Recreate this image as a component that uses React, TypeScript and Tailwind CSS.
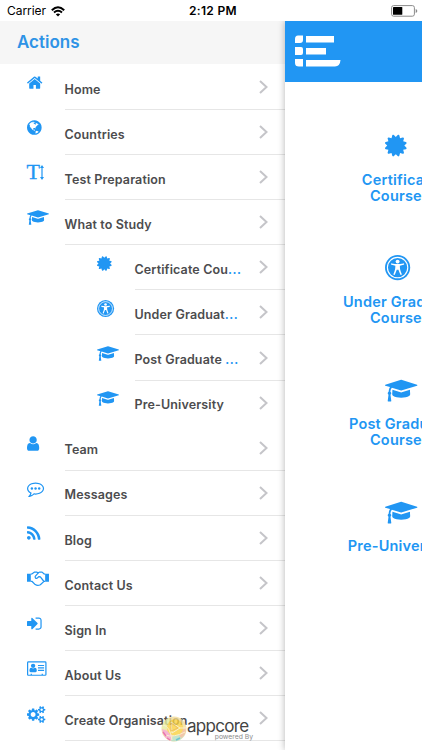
import { ReactNode } from 'react';

type IconName =
  | 'home' | 'globe' | 'textHeight' | 'cap' | 'certificate' | 'access' | 'user'
  | 'comment' | 'rss' | 'handshake' | 'signIn' | 'card' | 'cogs';

type GlyphProps = {
  x?: number;
  w: number;
  className: string;
  children: ReactNode;
};

// All glyphs share a 1792 unit em height
const Glyph = ({ x = 0, w, className, children }: GlyphProps) => (
  <svg viewBox={`${x} 0 ${w} 1792`} className={`block w-auto overflow-visible fill-current ${className}`}>
    {children}
  </svg>
);

const Icon = ({ name, className = 'h-[17.1px]' }: { name: IconName; className?: string }) => {
  switch (name) {
    case 'home':
      return (
        <Glyph x={90} w={1612} className={className}>
          <path d="M1472 992v480q0 26-19 45t-45 19h-384v-384h-256v384h-384q-26 0-45-19t-19-45v-480q0-1 .5-3t.5-3l575-474 575 474q1 2 1 6zm223-69l-62 74q-8 9-21 11h-3q-13 0-21-7l-692-577-692 577q-12 8-24 7-13-2-21-11l-62-74q-8-10-7-23.5t11-21.5l719-599q32-26 76-26t76 26l244 204v-195q0-14 9-23t23-9h192q14 0 23 9t9 23v408l219 182q10 8 11 21.5t-7 23.5z" />
        </Glyph>
      );
    case 'globe':
      return (
        <Glyph x={128} w={1536} className={className}>
          <path d="M896 128q209 0 385.5 103t279.5 279.5 103 385.5-103 385.5-279.5 279.5-385.5 103-385.5-103-279.5-279.5-103-385.5 103-385.5 279.5-279.5 385.5-103zm274 521q-2 1-9.5 9.5t-13.5 9.5q2 0 4.5-5t5-11 3.5-7q6-7 22-15 14-6 52-12 34-8 51 11-2-2 9.5-13t14.5-12q3-2 15-4.5t15-7.5l2-22q-12 1-17.5-7t-6.5-21q0 2-6 8 0-7-4.5-8t-11.5 1-9 1q-10-3-15-7.5t-8-16.5-4-15q-2-5-9.5-11t-9.5-10q-1-2-2.5-5.5t-3-6.5-4-5.5-5.5-2.5-7 5-7.5 10-4.5 5q-3-2-6-1.5t-4.5 1-4.5 3-5 3.5q-3 2-8.5 3t-8.5 2q15-5-1-11-10-4-16-3 9-4 7.5-12t-8.5-14h5q-1-4-8.5-8.5t-17.5-8.5-13-6q-8-5-34-9.5t-33-.5q-5 6-4.5 10.5t4 14 3.5 12.5q1 6-5.5 13t-6.5 12q0 7 14 15.5t10 21.5q-3 8-16 16t-16 12q-5 8-1.5 18.5t10.5 16.5q2 2 1.5 4t-3.5 4.5-5.5 4-6.5 3.5l-3 2q-11 5-20.5-6t-13.5-26q-7-25-16-30-23-8-29 1-5-13-41-26-25-9-58-4 6-1 0-15-7-15-19-12 3-6 4-17.5t1-13.5q3-13 12-23 1-1 7-8.5t9.5-13.5.5-6q35 4 50-11 5-5 11.5-17t10.5-17q9-6 14-5.5t14.5 5.5 14.5 5q14 1 15.5-11t-7.5-20q12 1 3-17-4-7-8-9-12-4-27 5-8 4 2 8-1-1-9.5 10.5t-16.5 17.5-16-5q-1-1-5.5-13.5t-9.5-13.5q-8 0-16 15 3-8-11-15t-24-8q19-12-8-27-7-4-20.5-5t-19.5 4q-5 7-5.5 11.5t5 8 10.5 5.5 11.5 4 8.5 3q14 10 8 14-2 1-8.5 3.5t-11.5 4.5-6 4q-3 4 0 14t-2 14q-5-5-9-17.5t-7-16.5q7 9-25 6l-10-1q-4 0-16 2t-20.5 1-13.5-8q-4-8 0-20 1-4 4-2-4-3-11-9.5t-10-8.5q-46 15-94 41 6 1 12-1 5-2 13-6.5t10-5.5q34-14 42-7l5-5q14 16 20 25-7-4-30-1-20 6-22 12 7 12 5 18-4-3-11.5-10t-14.5-11-15-5q-16 0-22 1-146 80-235 222 7 7 12 8 4 1 5 9t2.5 11 11.5-3q9 8 3 19 1-1 44 27 19 17 21 21 3 11-10 18-1-2-9-9t-9-4q-3 5 .5 18.5t10.5 12.5q-7 0-9.5 16t-2.5 35.5-1 23.5l2 1q-3 12 5.5 34.5t21.5 19.5q-13 3 20 43 6 8 8 9 3 2 12 7.5t15 10 10 10.5q4 5 10 22.5t14 23.5q-2 6 9.5 20t10.5 23q-1 0-2.5 1t-2.5 1q3 7 15.5 14t15.5 13q1 3 2 10t3 11 8 2q2-20-24-62-15-25-17-29-3-5-5.5-15.5t-4.5-14.5q2 0 6 1.5t8.5 3.5 7.5 4 2 3q-3 7 2 17.5t12 18.5 17 19 12 13q6 6 14 19.5t0 13.5q9 0 20 10.5t17 19.5q5 8 8 26t5 24q2 7 8.5 13.5t12.5 9.5l16 8 13 7q5 2 18.5 10.5t21.5 11.5q10 4 16 4t14.5-2.5 13.5-3.5q15-2 29 15t21 21q36 19 55 11-2 1 .5 7.5t8 15.5 9 14.5 5.5 8.5q5 6 18 15t18 15q6-4 7-9-3 8 7 20t18 10q14-3 14-32-31 15-49-18 0-1-2.5-5.5t-4-8.5-2.5-8.5 0-7.5 5-3q9 0 10-3.5t-2-12.5-4-13q-1-8-11-20t-12-15q-5 9-16 8t-16-9q0 1-1.5 5.5t-1.5 6.5q-13 0-15-1 1-3 2.5-17.5t3.5-22.5q1-4 5.5-12t7.5-14.5 4-12.5-4.5-9.5-17.5-2.5q-19 1-26 20-1 3-3 10.5t-5 11.5-9 7q-7 3-24 2t-24-5q-13-8-22.5-29t-9.5-37q0-10 2.5-26.5t3-25-5.5-24.5q3-2 9-9.5t10-10.5q2-1 4.5-1.5t4.5 0 4-1.5 3-6q-1-1-4-3-3-3-4-3 7 3 28.5-1.5t27.5 1.5q15 11 22-2 0-1-2.5-9.5t-.5-13.5q5 27 29 9 3 3 15.5 5t17.5 5q3 2 7 5.5t5.5 4.5 5-.5 8.5-6.5q10 14 12 24 11 40 19 44 7 3 11 2t4.5-9.5 0-14-1.5-12.5l-1-8v-18l-1-8q-15-3-18.5-12t1.5-18.5 15-18.5q1-1 8-3.5t15.5-6.5 12.5-8q21-19 15-35 7 0 11-9-1 0-5-3t-7.5-5-4.5-2q9-5 2-16 5-3 7.5-11t7.5-10q9 12 21 2 8-8 1-16 5-7 20.5-10.5t18.5-9.5q7 2 8-2t1-12 3-12q4-5 15-9t13-5l17-11q3-4 0-4 18 2 31-11 10-11-6-20 3-6-3-9.5t-15-5.5q3-1 11.5-.5t10.5-1.5q15-10-7-16-17-5-43 12zm-163 877q206-36 351-189-3-3-12.5-4.5t-12.5-3.5q-18-7-24-8 1-7-2.5-13t-8-9-12.5-8-11-7q-2-2-7-6t-7-5.5-7.5-4.5-8.5-2-10 1l-3 1q-3 1-5.5 2.500t-5.5 3-4 3 0 2.500q-21-17-36-22-5-1-11-5.500t-10.500-7-10-1.500-11.500 7q-5 5-6 15t-2 13q-7-5 0-17.500t2-18.500q-3-6-10.500-4.500t-12 4.500-11.500 8.500-9 6.500-8.500 5.500-8.500 7.500q-3 4-6 12t-5 11q-2-4-11.500-6.500t-9.500-5.500q2 10 4 35t5 38q7 31-12 48-27 25-29 40-4 22 12 26 0 7-8 20.500t-7 21.500q0 6 2 16z" />
        </Glyph>
      );
    case 'textHeight':
      return (
        <span className="-ml-[0.5px] flex h-[17px]">
          <span className="w-[13.5px] font-['Liberation_Serif',serif] text-[22px] leading-[15px] [-webkit-text-stroke:0.35px_#2196f3]">T</span>
          <svg viewBox="0 0 4 15" className="mt-px h-[15px] w-1 fill-current">
            <path d="M2 0L4 3H2.6V12H4L2 15L0 12H1.4V3H0Z" />
          </svg>
        </span>
      );
    case 'cap':
      return (
        <Glyph w={2304} className={className}>
          <path d="M1774 836l18 316q4 69-82 128t-235 93.5-323 34.5-323-34.5-235-93.5-82-128l18-316 574 181q22 7 48 7t48-7zm530-324q0 23-22 31l-1120 352q-4 1-10 1t-10-1l-652-206q-43 34-71 111.5t-34 178.5q63 36 63 109 0 69-58 107l58 433q2 14-8 25-9 11-24 11h-192q-15 0-24-11-10-11-8-25l58-433q-58-38-58-107 0-73 65-111 11-207 98-330l-333-104q-22-8-22-31t22-31l1120-352q4-1 10-1t10 1l1120 352q22 8 22 31z" />
        </Glyph>
      );
    case 'certificate':
      return (
        <Glyph w={1536} className={className}>
          <path d="M1376 896l138 135q30 28 20 70-12 41-52 51l-188 48 53 186q12 41-19 70-29 31-70 19l-186-53-48 188q-10 40-51 52-12 2-19 2-31 0-51-22l-135-138-135 138q-28 30-70 20-41-11-51-52l-48-188-186 53q-41 12-70-19-31-29-19-70l53-186-188-48q-40-10-52-51-10-42 20-70l138-135-138-135q-30-28-20-70 12-41 52-51l188-48-53-186q-12-41 19-70 29-31 70-19l186 53 48-188q10-41 51-51 41-12 70 19l135 139 135-139q29-30 70-19 41 10 51 51l48 188 186-53q41-12 70 19 31 29 19 70l-53 186 188 48q40 10 52 51 10 42-20 70z" />
        </Glyph>
      );
    case 'access':
      return (
        <Glyph w={1792} className={className}>
          <circle cx="896" cy="896" r="896" />
          <circle cx="896" cy="896" r="725" fill="none" stroke="white" strokeWidth="80" />
          <circle cx="896" cy="470" r="140" fill="white" />
          <path fill="white" d="M425 640q8-50 60-44 220 50 411 50t411-50q52-6 60 44 2 42-40 56-150 50-271 68 0 160 23 260 26 110 110 324 12 50-30 70-50 16-72-30-80-190-131-337h-120q-51 147-131 337-22 46-72 30-42-20-30-70 84-214 110-324 23-100 23-260-121-18-271-68-42-14-40-56z" />
        </Glyph>
      );
    case 'user':
      return (
        <Glyph x={256} w={1280} className={className}>
          <path d="M1536 1399q0 109-62.5 187t-150.5 78h-854q-88 0-150.5-78t-62.5-187q0-85 8.5-160.5t31.5-152 58.5-131 94-89 134.5-34.5q131 128 313 128t313-128q76 0 134.5 34.5t94 89 58.5 131 31.5 152 8.5 160.5zm-256-887q0 159-112.5 271.5t-271.5 112.5-271.5-112.5-112.5-271.5 112.5-271.5 271.5-112.5 271.5 112.5 112.5 271.5z" />
        </Glyph>
      );
    case 'comment':
      return (
        <Glyph w={1792} className={className}>
          <circle cx="512" cy="896" r="128" />
          <circle cx="896" cy="896" r="128" />
          <circle cx="1280" cy="896" r="128" />
          <path d="M896 384q-204 0-381.5 69.5t-282 187.5-104.5 255q0 112 71.5 213.5t201.5 175.5l87 50-27 96q-24 91-70 172 152-63 275-171l43-38 57 6q69 8 130 8 204 0 381.5-69.5t282-187.5 104.5-255-104.5-255-282-187.5-381.5-69.5zm896 512q0 174-120 321.5t-326 233-450 85.5q-70 0-145-8-198 175-460 242-49 14-114 22h-5q-15 0-27-10.5t-16-27.5v-1q-3-4-.5-12t2-10 4.5-9.5l6-9 7-8.5 8-9q7-8 31-34.5t34.5-38 31-39.5 32.5-51 27-59 26-76q-157-89-247.5-220t-90.5-281q0-130 71-248.5t191-204.5 286-136.5 348-50.5 348 50.5 286 136.5 191 204.5 71 248.5z" />
        </Glyph>
      );
    case 'rss':
      return (
        <Glyph x={192} w={1408} className={className}>
          <path d="M576 1344q0 80-56 136t-136 56-136-56-56-136 56-136 136-56 136 56 56 136zm512 123q2 28-17 48-18 21-47 21h-135q-25 0-43-16.5t-20-41.5q-22-229-184.5-391.5t-391.5-184.5q-25-2-41.5-20t-16.5-43v-135q0-29 21-47 17-17 43-17h5q160 13 306 80.5t259 181.5q114 113 181.5 259t80.5 306zm512 2q2 27-18 47-18 20-46 20h-143q-26 0-44.5-17.5t-19.5-42.5q-12-215-101-408.5t-231.5-336-336-231.5-408.5-102q-25-1-42.5-19.5t-17.5-43.5v-143q0-28 20-46 18-18 44-18h3q262 13 501.5 120t425.5 294q187 186 294 425.5t120 501.5z" />
        </Glyph>
      );
    case 'handshake':
      return (
        <Glyph w={2304} className={className}>
          <path d="M0 384H400V1240H0ZM1904 384H2304V1240H1904Z" />
          <g fill="none" stroke="currentColor" strokeWidth="130" strokeLinejoin="round">
            <path d="M400 440L500 420L760 230L1010 225L1170 290L1340 215L1580 225L1800 420L1904 440" />
            <path d="M400 1190L540 1200L860 1530Q1120 1690 1400 1540L1780 1190H1904" />
            <path d="M1210 280L860 670Q840 900 1040 880L1260 690L1400 720L1760 1180" />
          </g>
        </Glyph>
      );
    case 'signIn':
      return (
        <Glyph x={64} w={1536} className={className}>
          <path d="M1184 896q0 26-19 45l-544 544q-19 19-45 19t-45-19-19-45v-288h-384q-64 0-64-64v-384q0-64 64-64h384v-288q0-26 19-45t45-19 45 19l544 544q19 19 19 45zm416-352v704q0 119-84.5 203.5t-203.5 84.5h-320q-13 0-22.5-9.5t-9.5-22.5q0-4-1-20t-.5-26.5 3-23.5 10-19.5 20.5-6.5h320q66 0 113-47t47-113v-704q0-66-47-113t-113-47h-312l-11.5-1-11.5-3-8-5.5-7-9-2-13.5q0-4-1-20t-.5-26.5 3-23.5 10-19.5 20.5-6.5h320q119 0 203.5 84.5t84.5 203.5z" />
        </Glyph>
      );
    case 'card':
      return (
        <Glyph w={2048} className={className}>
          <path d="M1024 1131q0-64-9-117.5t-29.5-103-60.5-78-97-28.5q-6 4-30 18t-37.5 21.5-35.5 17.5-43 14.5-42 4.5-42-4.5-43-14.5-35.5-17.5-37.5-21.5-30-18q-57 0-97 28.5t-60.5 78-29.5 103-9 117.5 37 106.5 91 42.5h512q54 0 91-42.5t37-106.5z" />
          <circle cx="640" cy="611" r="227" />
          <path d="M1152 512h640v128h-640zM1152 768h640v128h-640zM1152 1024h640v128h-640z" />
          <path d="M384 1440h128v120h-128zM1536 1440h128v120h-128z" />
          <rect x="64" y="192" width="1920" height="1408" rx="90" fill="none" stroke="currentColor" strokeWidth="128" />
        </Glyph>
      );
    case 'cogs':
      return (
        <Glyph w={1920} className={className}>
          <path d="M896 896q0-106-75-181t-181-75-181 75-75 181 75 181 181 75 181-75 75-181zm768 512q0-52-38-90t-90-38-90 38-38 90q0 53 37.5 90.5t90.5 37.5 90.5-37.5 37.5-90.5zm0-1024q0-52-38-90t-90-38-90 38-38 90q0 53 37.5 90.5t90.5 37.5 90.5-37.5 37.5-90.5zm-384 421v185q0 10-7 19.5t-16 10.5l-155 24q-11 35-32 76 34 48 90 115 7 11 7 20 0 12-7 19-23 30-82.5 89.5t-78.5 59.5q-11 0-21-7l-115-90q-37 19-77 31-11 108-23 155-7 24-30 24h-186q-11 0-20-7.5t-10-17.5l-23-153q-34-10-75-31l-118 89q-7 7-20 7-11 0-21-8-144-133-144-160 0-9 7-19 10-14 41-53t47-61q-23-44-35-82l-152-24q-10-1-17-9.5t-7-19.5v-185q0-10 7-19.5t16-10.5l155-24q11-35 32-76-34-48-90-115-7-11-7-20 0-12 7-20 22-30 82-89t79-59q11 0 21 7l115 90q34-18 77-32 11-108 23-154 7-24 30-24h186q11 0 20 7.5t10 17.5l23 153q34 10 75 31l118-89q8-7 20-7 11 0 21 8 144 133 144 160 0 8-7 19-12 16-42 54t-45 60q23 48 34 82l152 23q10 2 17 10.5t7 19.5zm640 533v140q0 16-149 31-12 27-30 52 51 113 51 138 0 4-4 7-122 71-124 71-8 0-46-47t-52-68q-20 2-30 2t-30-2q-14 21-52 68t-46 47q-2 0-124-71-4-3-4-7 0-25 51-138-18-25-30-52-149-15-149-31v-140q0-16 149-31 13-29 30-52-51-113-51-138 0-4 4-7 4-2 35-20t59-34 30-16q8 0 46 46.5t52 67.5q20-2 30-2t30 2q51-71 92-112l6-2q4 0 124 70 4 3 4 7 0 25-51 138 17 23 30 52 149 15 149 31zm0-1024v140q0 16-149 31-12 27-30 52 51 113 51 138 0 4-4 7-122 71-124 71-8 0-46-47t-52-68q-20 2-30 2t-30-2q-14 21-52 68t-46 47q-2 0-124-71-4-3-4-7 0-25 51-138-18-25-30-52-149-15-149-31v-140q0-16 149-31 13-29 30-52-51-113-51-138 0-4 4-7 4-2 35-20t59-34 30-16q8 0 46 46.5t52 67.5q20-2 30-2t30 2q51-71 92-112l6-2q4 0 124 70 4 3 4 7 0 25-51 138 17 23 30 52 149 15 149 31z" />
        </Glyph>
      );
  }
};

type MenuItem = {
  icon: IconName;
  label: string;
  sub?: boolean;
  cut?: boolean;
  noLine?: boolean;
};

const menu: MenuItem[] = [
  { icon: 'home', label: 'Home' },
  { icon: 'globe', label: 'Countries' },
  { icon: 'textHeight', label: 'Test Preparation' },
  { icon: 'cap', label: 'What to Study' },
  { icon: 'certificate', label: 'Certificate Cou', sub: true, cut: true },
  { icon: 'access', label: 'Under Graduat', sub: true, cut: true },
  { icon: 'cap', label: 'Post Graduate ', sub: true, cut: true },
  { icon: 'cap', label: 'Pre-University', sub: true, noLine: true },
  { icon: 'user', label: 'Team' },
  { icon: 'comment', label: 'Messages' },
  { icon: 'rss', label: 'Blog' },
  { icon: 'handshake', label: 'Contact Us' },
  { icon: 'signIn', label: 'Sign In' },
  { icon: 'card', label: 'About Us' },
  { icon: 'cogs', label: 'Create Organisation' },
];

const courses: { icon: IconName; lines: string[] }[] = [
  { icon: 'certificate', lines: ['Certificate', 'Courses'] },
  { icon: 'access', lines: ['Under Graduate', 'Courses'] },
  { icon: 'cap', lines: ['Post Graduate', 'Courses'] },
  { icon: 'cap', lines: ['Pre-University'] },
];

const MenuRow = ({ icon, label, sub, cut, noLine }: MenuItem) => (
  <li className={`flex h-[45.1px] shrink-0 ${sub ? 'pl-[97px]' : 'pl-[27px]'}`}>
    <div className="w-[37.5px] shrink-0 pt-[9.3px] text-[#2196f3]">
      <Icon name={icon} />
    </div>
    <div className={`flex flex-1 items-center justify-between border-b pr-[17px] ${noLine ? 'border-transparent' : 'border-[#e6e6e6]'}`}>
      <span className="pt-[6px] whitespace-pre text-[12.5px] font-semibold tracking-[0.13px] text-[#4c4c4e]">
        {label}
        {cut && <span className="tracking-[0.5px] text-[#2196f3]">...</span>}
      </span>
      <svg viewBox="0 0 9 14" className="h-3.5 w-[9px] shrink-0 fill-none stroke-[#c5c5c9] stroke-2">
        <path d="M1 1L7.5 7L1 13" />
      </svg>
    </div>
  </li>
);

const StatusBar = () => (
  <div className="grid h-[21px] shrink-0 grid-cols-3 items-center pt-px pr-1 pl-[7px] text-black">
    <div className="flex items-center gap-[5px] text-[12px]">
      <span className="tracking-[-0.05px]">Carrier</span>
      <svg viewBox="0 0 14 11" className="h-[11px] w-3.5 fill-none stroke-black stroke-[2]">
        <path d="M.8 4.2Q7-1.6 13.2 4.2M3 6.6Q7 3 11 6.6" />
        <path d="M4.8 8.3Q7 6.5 9.2 8.3L7 10.6Z" className="fill-black stroke-none" />
      </svg>
    </div>
    <span className="pl-px text-center text-[12px] font-semibold tracking-[0.3px]">2:12 PM</span>
    <svg viewBox="0 0 27 12" className="h-3 w-[27px] justify-self-end">
      <rect x=".6" y=".6" width="22.8" height="10.6" rx="2" fill="none" stroke="#8a8a8a" />
      <rect x="2" y="2" width="9.3" height="7.8" rx=".6" fill="black" />
      <path d="M24.7 4q1.6.4 1.6 2t-1.6 2z" fill="#8a8a8a" />
    </svg>
  </div>
);

// "Powered by" watermark at the bottom of the drawer
const Watermark = () => (
  <div className="absolute top-[716px] left-[161px] flex">
    <svg viewBox="0 0 26 26" className="h-[26px] w-[26px] opacity-80">
      <circle cx="13" cy="13" r="12.5" fill="#f3dc98" />
      <path d="M1 13A12 12 0 0 1 8 2L13 13Z" fill="#e6ec9a" />
      <path d="M1 13Q2 22 10 25L12 17Z" fill="#f3a4c6" />
      <path d="M10 25Q19 27 24 18L14 16Z" fill="#b5dfc0" />
      <path d="M25 12Q25 19 20 22L15 14Z" fill="#f2b795" />
      <circle cx="14" cy="11.5" r="8.2" fill="#f9d140" />
      <path d="M10 6L19 12L11 17ZM2 9Q9 10 11 24M4 19Q13 22 24 16M19 12H25" fill="none" stroke="#f8edc2" strokeWidth="1" />
      <path d="M10 7V15L17 12Z" fill="none" stroke="#e6a93a" strokeWidth=".8" />
      <path d="M2 16L5 20M6 22L9 24" stroke="#e5559a" strokeWidth="1.4" />
      <path d="M15 24L19 22" stroke="#49b8c8" strokeWidth="1.4" />
    </svg>
    <div className="flex w-[66px] flex-col">
      <span className="h-[18px] text-[17px] leading-[21px] tracking-[-0.7px] text-[#444444]">appcore</span>
      <span className="h-2 self-end text-[6.8px] leading-[5px] whitespace-nowrap text-[#8c8c8c]">powered By</span>
    </div>
  </div>
);

export default function App() {
  return (
    <div className="relative flex h-[750px] w-[422px] flex-col overflow-hidden bg-white font-['Inter',sans-serif]">
      <StatusBar />
      <div className="flex min-h-0 flex-1 overflow-hidden">
        <aside className="flex w-[285px] shrink-0 flex-col overflow-hidden">
          <header className="flex h-[43px] shrink-0 items-center bg-[#f6f6f6] pl-[17px]">
            <h1 className="text-[17px] font-semibold text-[#2e93e6]">Actions</h1>
          </header>
          <ul className="flex flex-col pt-[0.9px]">
            {menu.map((item) => (
              <MenuRow key={item.label} {...item} />
            ))}
          </ul>
        </aside>
        <main className="z-10 flex-1 overflow-hidden bg-white shadow-[0_0_7px_rgba(0,0,0,0.3)]">
          <header className="flex h-[60.5px] items-start bg-[#2196f3] pt-[14px] pl-2.5">
            <svg viewBox="0 0 46 32" className="h-8 w-[46px] fill-white">
              <path d="M3 .5H8V5Q8 8 5 8H0V4Q0 .5 3 .5ZM0 12H6Q8 12 8 14V18Q8 20 6 20H0ZM0 24H8V31.5H4Q0 31.5 0 28Z" />
              <path d="M11 1H39V7.5H11ZM11 13H31V19.5H11ZM11 25H45.5Q45 31.5 40 31.5H11Z" />
            </svg>
          </header>
          <div className="flex w-[230px] flex-col pt-[51.7px]">
            {courses.map((course) => (
              <div key={course.lines[0]} className="flex h-[122.2px] flex-col text-[#2196f3]">
                <div className="pl-[99.5px]">
                  <Icon name={course.icon} className="h-[25.2px]" />
                </div>
                <div className="mt-[13.5px] flex flex-col text-center text-[14.5px] leading-4 font-semibold tracking-[0.2px]">
                  {course.lines.map((line) => (
                    <span key={line}>{line}</span>
                  ))}
                </div>
              </div>
            ))}
          </div>
        </main>
      </div>
      <Watermark />
    </div>
  );
}
